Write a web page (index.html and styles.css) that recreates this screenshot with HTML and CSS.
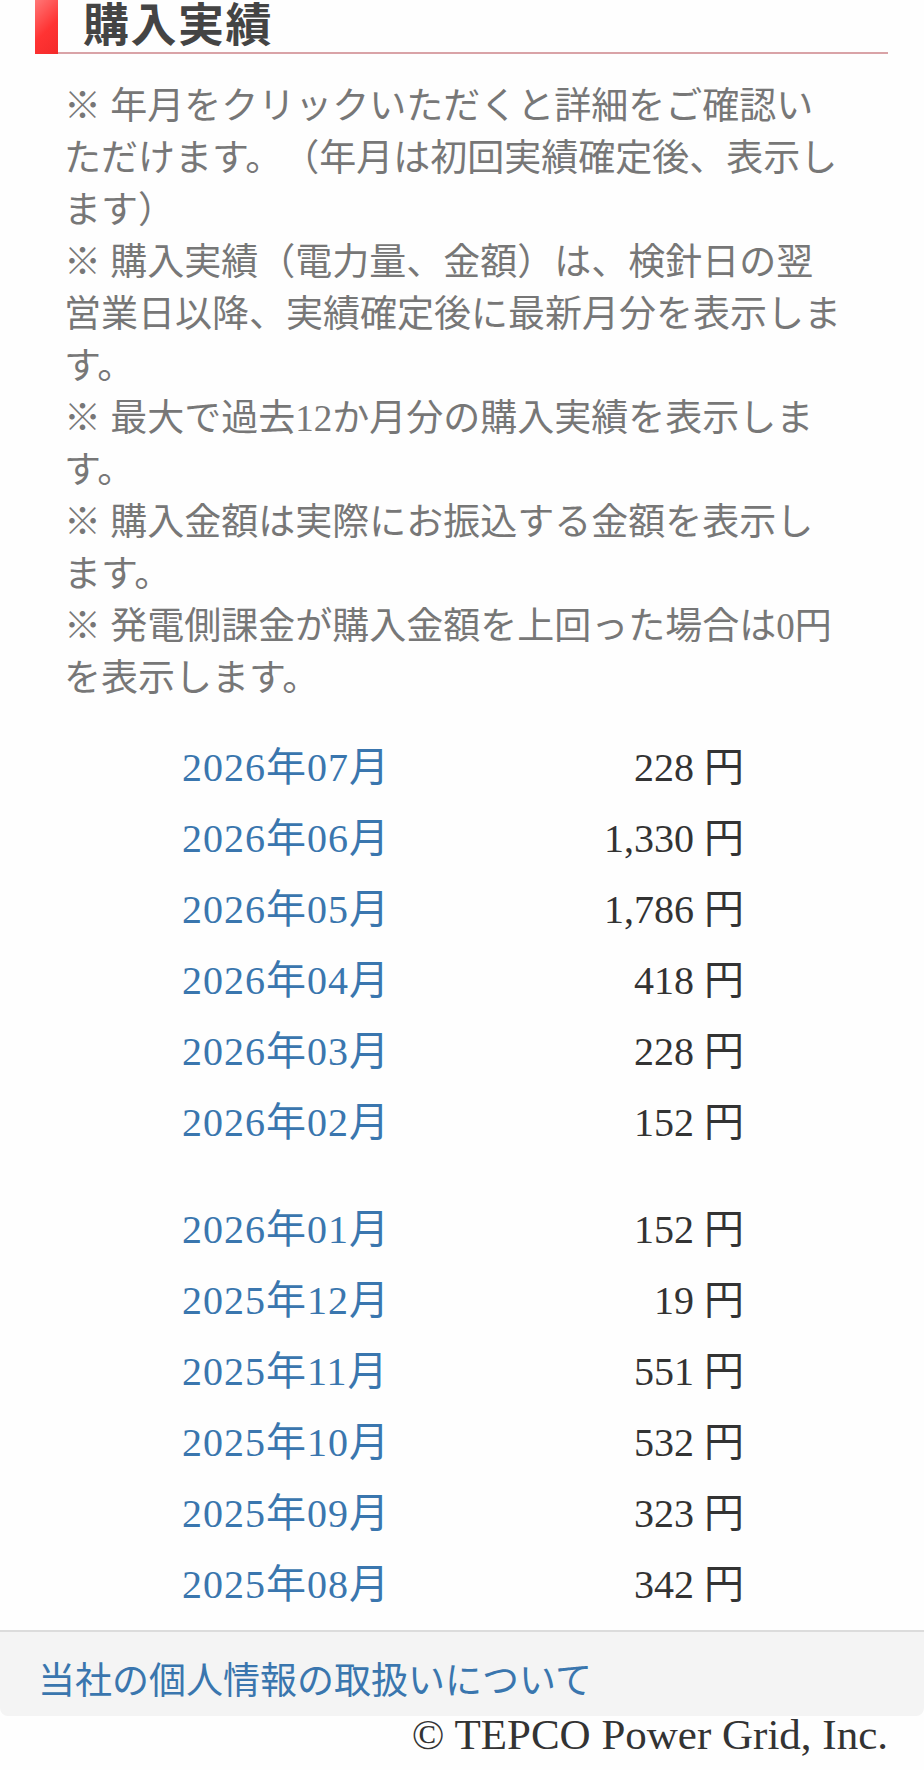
FILE: index.html
```html
<!DOCTYPE html>
<html lang="ja">
<head>
<meta charset="utf-8">
<title>購入実績</title>
<link rel="stylesheet" href="styles.css">
</head>
<body>
<main class="page">
  <h2 class="section-title">購入実績</h2>
  <div class="notes">
    <p>※ 年月をクリックいただくと詳細をご確認いただけます。（年月は初回実績確定後、表示します）</p>
    <p>※ 購入実績（電力量、金額）は、検針日の翌営業日以降、実績確定後に最新月分を表示します。</p>
    <p>※ 最大で過去12か月分の購入実績を表示します。</p>
    <p>※ 購入金額は実際にお振込する金額を表示します。</p>
    <p>※ 発電側課金が購入金額を上回った場合は0円を表示します。</p>
  </div>
  <div class="results">
    <div class="group">
      <div class="row"><a class="month" href="#">2026年07月</a><span class="amount">228 円</span></div>
      <div class="row"><a class="month" href="#">2026年06月</a><span class="amount">1,330 円</span></div>
      <div class="row"><a class="month" href="#">2026年05月</a><span class="amount">1,786 円</span></div>
      <div class="row"><a class="month" href="#">2026年04月</a><span class="amount">418 円</span></div>
      <div class="row"><a class="month" href="#">2026年03月</a><span class="amount">228 円</span></div>
      <div class="row"><a class="month" href="#">2026年02月</a><span class="amount">152 円</span></div>
    </div>
    <div class="group">
      <div class="row"><a class="month" href="#">2026年01月</a><span class="amount">152 円</span></div>
      <div class="row"><a class="month" href="#">2025年12月</a><span class="amount">19 円</span></div>
      <div class="row"><a class="month" href="#">2025年11月</a><span class="amount">551 円</span></div>
      <div class="row"><a class="month" href="#">2025年10月</a><span class="amount">532 円</span></div>
      <div class="row"><a class="month" href="#">2025年09月</a><span class="amount">323 円</span></div>
      <div class="row"><a class="month" href="#">2025年08月</a><span class="amount">342 円</span></div>
    </div>
  </div>
</main>
<footer class="footer">
  <div class="footer-links"><a href="#">当社の個人情報の取扱いについて</a></div>
  <p class="copyright">© TEPCO Power Grid, Inc.</p>
</footer>
</body>
</html>
```

FILE: styles.css
```css
html, body {
  margin: 0;
  padding: 0;
  background: #fefefe;
}

body {
  font-family: "Liberation Serif", "Noto Sans CJK JP", serif;
  color: #333;
}

a {
  text-decoration: none;
  color: #3a76ae;
}

.section-title {
  display: flex;
  align-items: stretch;
  margin: 0 36px 0 35px;
  height: 52px;
  border-bottom: 2px solid #d9a3a7;
  font-size: 46px;
  line-height: 52px;
  font-weight: bold;
  color: #444;
  letter-spacing: 1.5px;
}

.section-title::before {
  content: "";
  width: 23px;
  margin-bottom: -2px;
  margin-right: 25px;
  background: linear-gradient(135deg, #ff7777 0%, #ff3333 55%, #f42a2a 100%);
}

.notes {
  margin: 27px 0 0 64px;
  width: 784px;
  font-size: 37px;
  line-height: 52px;
  color: #777;
  text-spacing-trim: space-all;
}

.notes p {
  margin: 0;
}

.results {
  margin-top: 23px;
  display: flex;
  flex-direction: column;
  gap: 36px;
}

.group {
  width: 562px;
  margin: 0 auto 0 182px;
  display: flex;
  flex-direction: column;
}

.row {
  display: flex;
  justify-content: space-between;
  align-items: center;
  height: 71px;
  font-size: 40px;
}

.month {
  color: #3a76ae;
  letter-spacing: 1px;
}

.amount {
  color: #333;
}

.footer {
  margin-top: 14px;
}

.footer-links {
  border-top: 2px solid #dcdcdc;
  background: #f4f4f4;
  border-radius: 0 0 8px 8px;
  padding: 24px 0 8px 38px;
  font-size: 37px;
  line-height: 52px;
}

.copyright {
  margin: -6px 0 0;
  padding-right: 36px;
  text-align: right;
  font-size: 43px;
  color: #333;
}
```
